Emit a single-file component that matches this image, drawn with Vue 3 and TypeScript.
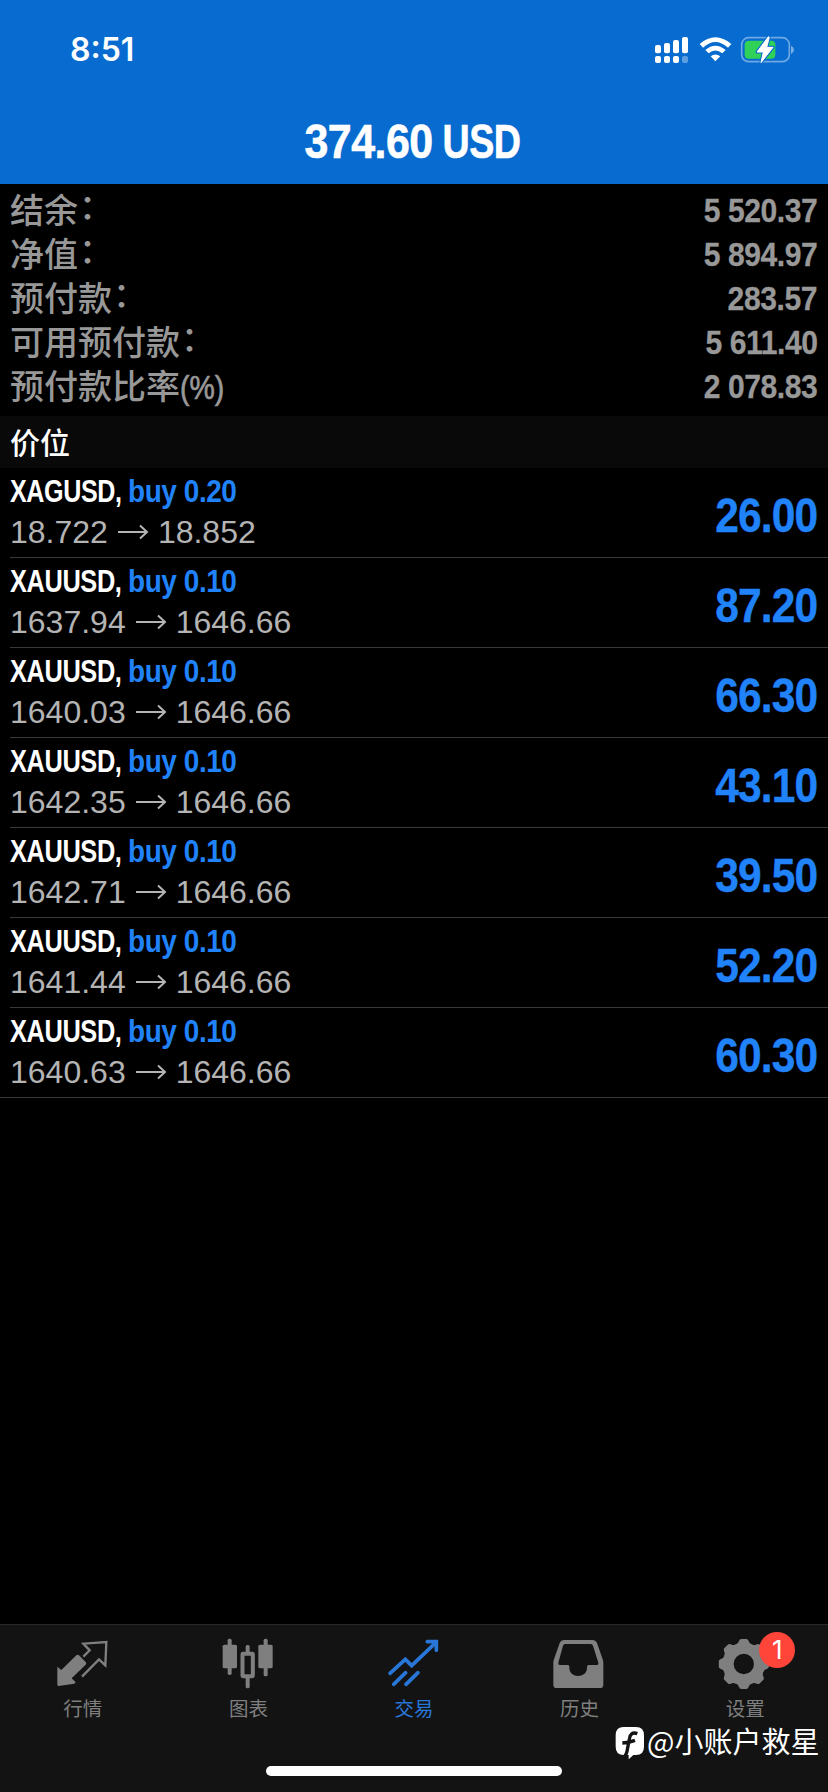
<script setup lang="ts">
interface SummaryLine {
  label: string
  suffix: string
  value: string
}

interface Position {
  symbol: string
  volume: string
  open: string
  current: string
  profit: string
}

const summary: SummaryLine[] = [
  { label: '结余', suffix: '：', value: '5 520.37' },
  { label: '净值', suffix: '：', value: '5 894.97' },
  { label: '预付款', suffix: '：', value: '283.57' },
  { label: '可用预付款', suffix: '：', value: '5 611.40' },
  { label: '预付款比率', suffix: '(%)', value: '2 078.83' },
]

const positions: Position[] = [
  { symbol: 'XAGUSD,', volume: 'buy 0.20', open: '18.722', current: '18.852', profit: '26.00' },
  { symbol: 'XAUUSD,', volume: 'buy 0.10', open: '1637.94', current: '1646.66', profit: '87.20' },
  { symbol: 'XAUUSD,', volume: 'buy 0.10', open: '1640.03', current: '1646.66', profit: '66.30' },
  { symbol: 'XAUUSD,', volume: 'buy 0.10', open: '1642.35', current: '1646.66', profit: '43.10' },
  { symbol: 'XAUUSD,', volume: 'buy 0.10', open: '1642.71', current: '1646.66', profit: '39.50' },
  { symbol: 'XAUUSD,', volume: 'buy 0.10', open: '1641.44', current: '1646.66', profit: '52.20' },
  { symbol: 'XAUUSD,', volume: 'buy 0.10', open: '1640.63', current: '1646.66', profit: '60.30' },
]

const teeth: number[] = [0, 45, 90, 135, 180, 225, 270, 315]
</script>

<template>
  <div class="screen">
    <header class="header">
      <div class="status">
        <span class="time">8:51</span>
        <svg class="status-icons" viewBox="150 60 450 111">
          <g fill="#fff">
            <rect x="165" y="105" width="18" height="25" rx="6" />
            <rect x="192" y="99" width="18" height="31" rx="6" />
            <rect x="219" y="90" width="18" height="40" rx="6" />
            <rect x="246" y="81" width="18" height="49" rx="6" />
            <rect x="165" y="138" width="18" height="21" rx="6" />
            <rect x="192" y="138" width="18" height="21" rx="6" />
            <rect x="219" y="138" width="18" height="21" rx="6" />
            <rect x="246" y="138" width="18" height="21" rx="6" opacity=".35" />
            <path d="M299 102Q346 62 394 102L384 113Q346 79 309 113Z" />
            <path d="M316 120Q346 94 377 120L367 130Q346 113 326 130Z" />
            <path d="M332 139Q346 128 361 139L346 154Z" />
          </g>
          <rect x="425" y="83" width="143" height="72" rx="21" fill="none" stroke="#fff" stroke-opacity=".42" stroke-width="5" />
          <path d="M573 107Q582 111 582 119T573 132Z" fill="#fff" opacity=".45" />
          <rect x="434" y="92" width="92" height="54" rx="12" fill="#30d158" />
          <path d="M505 80L471 126H490L483 158L519 112H500L508 82Z" fill="#fff" stroke="#076bcf" stroke-width="9" stroke-linejoin="round" />
          <path d="M505 80L471 126H490L483 158L519 112H500L508 82Z" fill="#fff" stroke="#fff" stroke-width="3" stroke-linejoin="round" />
        </svg>
      </div>
      <svg class="total" viewBox="0 0 828 84">
        <text transform="translate(304.5 58) scale(.895 1)">374.60</text>
        <text transform="translate(442.5 58) scale(.785 1)">USD</text>
      </svg>
    </header>

    <section class="summary">
      <div v-for="line in summary" :key="line.label" class="summary-line">
        <span class="label">{{ line.label }}<span :class="line.suffix === '：' ? 'colon' : 'percent'">{{ line.suffix }}</span></span>
        <span class="amount">{{ line.value }}</span>
      </div>
    </section>

    <h2 class="section-title">价位</h2>

    <main class="positions">
      <article v-for="(p, i) in positions" :key="i" class="position">
        <div class="details">
          <svg class="instrument" viewBox="0 0 240 42">
            <text :transform="`translate(0 34) scale(${p.symbol === 'XAGUSD,' ? 0.785 : 0.794} 1)`" fill="#fff">{{ p.symbol }}</text>
            <text transform="translate(118 34) scale(.875 1)" fill="#2083fa">{{ p.volume }}</text>
          </svg>
          <div class="prices">
            <span>{{ p.open }}</span>
            <svg class="arrow" viewBox="0 0 32 16"><path d="M1 8H30M23 1.5L30 8L23 14.5" /></svg>
            <span>{{ p.current }}</span>
          </div>
        </div>
        <span class="profit">{{ p.profit }}</span>
      </article>
    </main>

    <nav class="tabs">
      <div class="tab">
        <svg class="icon" viewBox="164 78 168 168">
          <path d="M228 136Q232 133 236 136L256 156Q260 160 256 164L214 205L226 217L222 221L175 228Q171 228 171 224V170L183 180Z" fill="#7f7f7f" />
          <path d="M249 140L268 121L249 101L318 96L315 166L296 148L245 200" fill="none" stroke="#7f7f7f" stroke-width="7" />
        </svg>
        <span>行情</span>
      </div>
      <div class="tab">
        <svg class="icon" viewBox="661 78 168 168">
          <g fill="#7f7f7f">
            <rect x="669" y="104" width="43" height="71" rx="5" />
            <rect x="684" y="86" width="12" height="109" rx="5" />
            <rect x="776" y="104" width="43" height="71" rx="5" />
            <rect x="792" y="86" width="12" height="113" rx="5" />
            <rect x="738" y="105" width="12" height="26" rx="5" />
            <rect x="738" y="200" width="12" height="35" rx="5" />
          </g>
          <rect x="728.5" y="131.5" width="31" height="67" rx="1" fill="none" stroke="#7f7f7f" stroke-width="12" />
        </svg>
        <span>图表</span>
      </div>
      <div class="tab active">
        <svg class="icon" viewBox="78 78 168 168">
          <g fill="none" stroke="#2877d8" stroke-width="11" stroke-linecap="round">
            <path d="M90 190L136 148L155 167L228 97" />
            <path d="M202 95H229V121" />
            <path d="M101 223L137 188M138 223L174 188" />
          </g>
        </svg>
        <span>交易</span>
      </div>
      <div class="tab">
        <svg class="icon" viewBox="575 78 168 168">
          <path d="M612 90H696Q706 90 710 99L727 148Q729 153 729 160V224Q729 234 719 234H589Q579 234 579 224V160Q579 153 581 148L598 99Q602 90 612 90ZM614 102Q610 102 608 107L594 158Q593 165 599 165H623Q627 165 627 170V173C627 206 680 206 680 173V170Q680 165 685 165H708Q715 165 714 158L698 107Q696 102 692 102Z" fill="#7f7f7f" fill-rule="evenodd" />
        </svg>
        <span>历史</span>
      </div>
      <div class="tab">
        <div class="icon-wrap">
          <svg class="icon" viewBox="351.6 78 168 168">
            <g transform="translate(432 162)">
              <circle r="47" fill="none" stroke="#7f7f7f" stroke-width="33" />
              <path v-for="a in teeth" :key="a" :transform="`rotate(${a})`" d="M-24 -58Q-17 -61 -14 -70Q-12 -75 -8 -75H8Q12 -75 14 -70Q17 -61 24 -58L20 -50H-20Z" fill="#7f7f7f" />
            </g>
          </svg>
          <span class="badge">1</span>
        </div>
        <span>设置</span>
      </div>
    </nav>

    <div class="watermark">
      <svg class="mark" viewBox="43 350 90 102">
        <path d="M69 353H106Q130 353 130 378V412Q130 437 106 437H98L84 450V437H69Q45 437 45 412V378Q45 353 69 353Z" fill="#fff" />
        <path d="M110 373C95 367 88 375 86 389L79 426Q77 436 72 440M65 401Q84 400 103 393" fill="none" stroke="#131313" stroke-width="10" />
      </svg>
      <span>@小账户救星</span>
    </div>
    <div class="home-indicator"></div>
  </div>
</template>

<style>
html,
body {
  background: #000;
}
</style>

<style scoped>
.screen {
  position: relative;
  display: flex;
  flex-direction: column;
  width: 828px;
  height: 1792px;
  overflow: hidden;
  background: #000;
  font-family: "Liberation Sans", "Noto Sans CJK SC", sans-serif;
}

.header {
  height: 184px;
  background: #076bcf;
}

.status {
  display: flex;
  justify-content: space-between;
  height: 100px;
  padding: 30px 28px 0 70px;
  box-sizing: border-box;
}

.time {
  font: 600 32px/40px Inter, sans-serif;
  color: #fff;
}

.status-icons {
  width: 150px;
  height: 37px;
}

.total {
  display: block;
  width: 828px;
  height: 84px;
  font-size: 48px;
  font-weight: 700;
  letter-spacing: -0.6px;
  fill: #fff;
  stroke: #fff;
  stroke-width: 0.6px;
}

.summary {
  height: 232px;
  padding: 4px 11px 0 10px;
  box-sizing: border-box;
}

.summary-line {
  display: flex;
  justify-content: space-between;
  height: 44px;
  line-height: 44px;
  color: #989898;
}

.label {
  font-family: "Noto Sans CJK SC", sans-serif;
  font-size: 34px;
  font-weight: 500;
  line-height: 42px;
  white-space: nowrap;
}

.colon {
  display: inline-block;
  transform: translate(1px, -4px);
}

.percent {
  display: inline-block;
  font-family: "Liberation Sans", sans-serif;
  font-size: 33px;
  -webkit-text-stroke: 0.7px #989898;
  transform: scaleX(0.86);
  transform-origin: left;
}

.amount {
  font-size: 34px;
  font-weight: 700;
  letter-spacing: -0.5px;
  -webkit-text-stroke: 0.3px #989898;
  transform: scaleX(0.885);
  transform-origin: right;
}

.section-title {
  height: 52px;
  margin: 0;
  padding-left: 10px;
  background: #090909;
  color: #fff;
  font: 500 30px/50px "Noto Sans CJK SC", sans-serif;
}

.position {
  display: flex;
  justify-content: space-between;
  height: 90px;
  margin-left: 10px;
  padding-right: 11px;
  box-sizing: border-box;
  border-bottom: 1px solid #3a3a3a;
}

.position:last-child {
  margin-left: 0;
  padding-left: 10px;
}

.instrument {
  display: block;
  width: 240px;
  height: 42px;
  font-size: 32px;
  font-weight: 700;
  letter-spacing: -0.5px;
}

.prices {
  display: flex;
  align-items: center;
  height: 44px;
  color: #b4b4b4;
  font-size: 32px;
  line-height: 44px;
}

.arrow {
  width: 32px;
  height: 16px;
  margin: 0 9px;
  fill: none;
  stroke: #b4b4b4;
  stroke-width: 2;
}

.profit {
  color: #2083fa;
  font-size: 48px;
  font-weight: 700;
  letter-spacing: -1px;
  line-height: 95px;
  -webkit-text-stroke: 0.4px #2083fa;
  transform: scaleX(0.885);
  transform-origin: right;
}

.tabs {
  display: flex;
  height: 168px;
  margin-top: auto;
  box-sizing: border-box;
  border-top: 1px solid #292929;
  background: #131313;
  color: #7f7f7f;
  font: 400 19.5px/32px "Noto Sans CJK SC", sans-serif;
}

.tab {
  display: flex;
  flex: 1;
  flex-direction: column;
  align-items: center;
  padding-top: 11px;
}

.tab.active {
  color: #2877d8;
}

.icon {
  display: block;
  width: 56px;
  height: 56px;
}

.icon-wrap {
  position: relative;
}

.badge {
  position: absolute;
  top: -4px;
  left: 42px;
  width: 36px;
  height: 36px;
  border-radius: 50%;
  background: #ff453a;
  color: #fff;
  font: 400 26px/36px Inter, sans-serif;
  text-align: center;
}

.watermark {
  position: absolute;
  top: 1719px;
  left: 615px;
  display: flex;
  align-items: center;
  color: #fff;
  font: 400 29px/42px "Noto Sans CJK SC", sans-serif;
  white-space: nowrap;
}

.mark {
  width: 30px;
  height: 34px;
  margin-top: 6px;
  margin-right: 2px;
}

.home-indicator {
  position: absolute;
  bottom: 16px;
  left: 266px;
  width: 296px;
  height: 10px;
  border-radius: 5px;
  background: #fff;
}
</style>
